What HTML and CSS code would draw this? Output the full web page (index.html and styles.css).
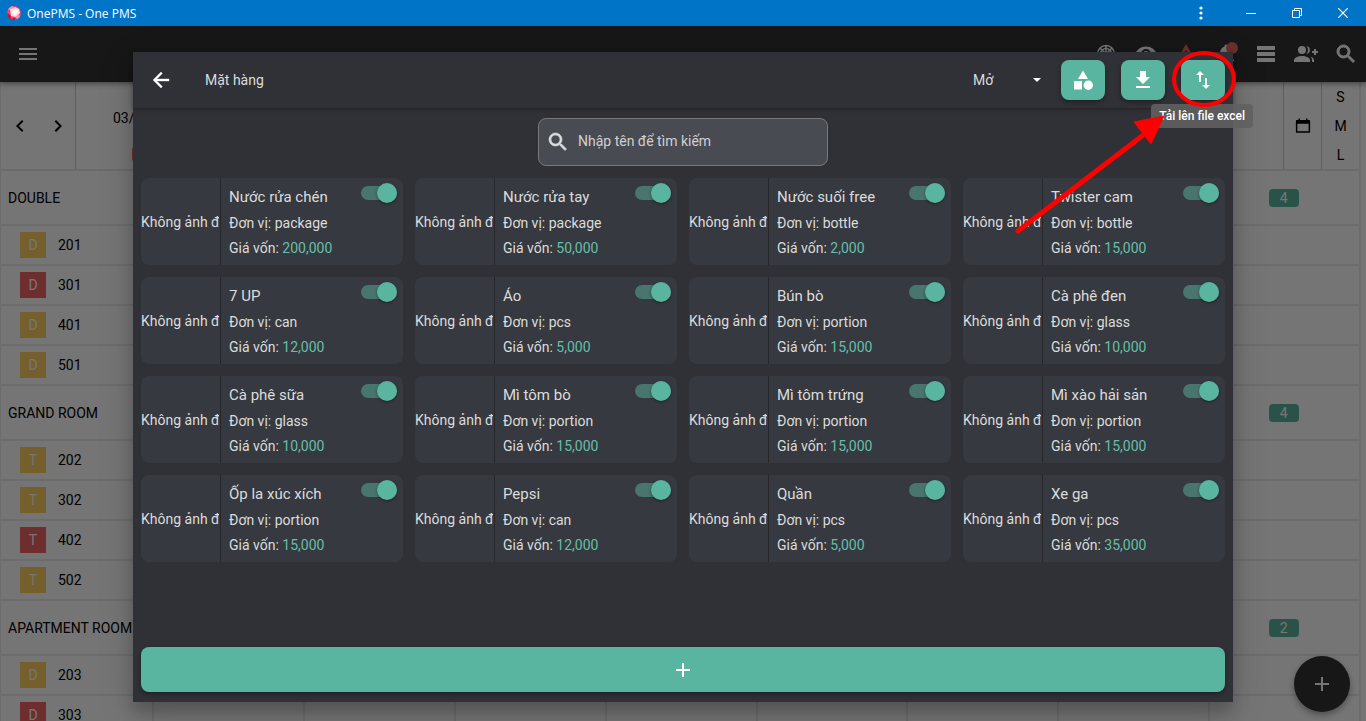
FILE: index.html
```html
<!DOCTYPE html>
<html lang="vi">
<head>
<meta charset="utf-8">
<meta name="viewport" content="width=device-width, initial-scale=1">
<title>OnePMS - One PMS</title>
<link rel="stylesheet" href="styles.css">
</head>
<body>
<div class="window">
  <header class="titlebar">
    <svg class="app-logo" viewBox="0 0 14 14" aria-hidden="true"><path fill="#f0456a" d="M5 0h4l4 3 1 4-1 4-4 3H5l-4-3-1-4 1-4z"/><path fill="#ffdbe6" d="M3 3l5-2 4 2 1 4-4 4-5-1z"/><path fill="#c5102f" d="M0 7l3 2 2 5-4-3zM6 12l3 0-1 2H5z"/><path fill="#ff8fa8" d="M5 0l3 2-4 1-3 1 1-2zM12 8l1 3-3 2-2-2z"/><path fill="#fff" d="M6 4l3-1 2 3-3 3-3-2z"/></svg>
    <span class="titlebar-text">OnePMS - One PMS</span>
    <button class="win-btn win-menu" aria-label="Menu"><svg width="4" height="14" viewBox="0 0 4 14"><g fill="#fff"><circle cx="2" cy="2" r="1.600"/><circle cx="2" cy="7" r="1.600"/><circle cx="2" cy="12" r="1.600"/></g></svg></button>
    <button class="win-btn" aria-label="Minimize"><svg width="10" height="10" viewBox="0 0 10 10"><path d="M0 5.500h10" stroke="#fff"/></svg></button>
    <button class="win-btn" aria-label="Restore"><svg width="10" height="10" viewBox="0 0 10 10"><path d="M.5 2.500h7v7h-7zM2.500 2.500v-2h7v7h-2" fill="none" stroke="#fff"/></svg></button>
    <button class="win-btn" aria-label="Close"><svg width="10" height="10" viewBox="0 0 10 10"><path d="M0 0l10 10M10 0L0 10" stroke="#fff" stroke-width="1.200"/></svg></button>
  </header>

  <div class="app">
    <nav class="appbar">
      <button class="icon-btn" aria-label="Menu chính"><svg class="icon" viewBox="0 0 24 24"><path d="M3 18h18v-2H3v2zm0-5h18v-2H3v2zm0-7v2h18V6H3z"/></svg></button>
      <div class="appbar-actions">
        <button class="icon-btn" aria-label="Kênh"><svg class="icon" viewBox="0 0 24 24"><g fill="none" stroke="#fff" stroke-width="1.500"><circle cx="12" cy="12" r="8.500"/><circle cx="12" cy="12" r="5.500"/><circle cx="12" cy="12" r="2"/><path d="M12 3v18M6 6l12 12M18 6L6 18"/></g></svg></button>
        <button class="icon-btn" aria-label="Hiển thị"><svg class="icon" viewBox="0 0 24 24"><path d="M12 4.500C7 4.500 2.730 7.610 1 12c1.730 4.390 6 7.500 11 7.500s9.270-3.110 11-7.500c-1.730-4.390-6-7.500-11-7.500zM12 17a5 5 0 1 1 0-10 5 5 0 0 1 0 10zm0-8a3 3 0 1 0 0 6 3 3 0 0 0 0-6z"/></svg></button>
        <button class="icon-btn" aria-label="Cảnh báo"><svg class="icon icon-warn" viewBox="0 0 24 24"><path d="M1 21h22L12 2 1 21zm5-3l6-10 6 10z"/></svg></button>
        <button class="icon-btn bell" aria-label="Thông báo"><svg class="icon" viewBox="0 0 24 24"><path d="M12 22c1.100 0 2-.9 2-2h-4c0 1.100.9 2 2 2zm6-6v-5c0-3.070-1.640-5.640-4.500-6.320V4a1.500 1.500 0 0 0-3 0v.68C7.630 5.360 6 7.920 6 11v5l-2 2v1h16v-1l-2-2z"/></svg><span class="dot"></span></button>
        <button class="icon-btn" aria-label="Danh sách"><svg class="icon" viewBox="0 0 24 24"><path d="M3 4h18v4H3zM3 10h18v4H3zM3 16h18v4H3z"/></svg></button>
        <button class="icon-btn" aria-label="Thêm khách"><svg class="icon" viewBox="0 0 24 24"><path d="M22 9V7h-2v2h-2v2h2v2h2v-2h2V9z"/><circle cx="8" cy="8" r="4"/><path d="M8 14c-4 0-8 2-8 4v2h16v-2c0-2-4-4-8-4zM12.500 11.950a4 4 0 0 0 0-7.900c.9 1 1.500 2.500 1.500 3.950s-.6 2.950-1.500 3.950zM16.500 14.800c.9.850 1.500 1.900 1.500 3.200v2h2v-2c0-1.400-1.500-2.500-3.500-3.200z"/></svg></button>
        <button class="icon-btn" aria-label="Tìm"><svg class="icon" viewBox="0 0 24 24"><path d="M15.500 14h-.79l-.28-.27A6.500 6.500 0 1 0 13.730 14.430l.27.28v.79l5 5L20.500 19l-5-5zm-6 0a4.500 4.500 0 1 1 0-9 4.500 4.500 0 0 1 0 9z" stroke="#fff"/></svg></button>
      </div>
    </nav>

    <main class="board">
      <div class="board-head">
        <div class="pager">
          <button class="icon-btn" aria-label="Trước"><svg class="icon icon-dark" viewBox="0 0 24 24"><path d="M15.400 7.400L14 6l-6 6 6 6 1.400-1.400L10.800 12z"/></svg></button>
          <button class="icon-btn" aria-label="Sau"><svg class="icon icon-dark" viewBox="0 0 24 24"><path d="M8.600 16.600L10 18l6-6-6-6-1.400 1.400L13.200 12z"/></svg></button>
        </div>
        <div class="date-cell"><span>03/</span><span class="date-badge"></span></div>
        <div class="cal-cell"><svg class="icon icon-dark" viewBox="0 0 24 24"><path d="M20 4h-2V2h-2v2H8V2H6v2H4c-1 0-1.500.5-1.500 1.500v14c0 1 .5 1.500 1.500 1.500h16c1 0 1.500-.5 1.500-1.500v-14c0-1-.5-1.500-1.500-1.500zm-.5 15h-15V9h15z"/></svg></div>
        <div class="size-cell"><span>S</span><span>M</span><span>L</span></div>
      </div>
      <div class="rows" id="rows"></div>
    </main>

    <button class="fab" aria-label="Thêm"><svg class="icon" viewBox="0 0 24 24"><path d="M19 13h-6v6h-2v-6H5v-2h6V5h2v6h6z"/></svg></button>

    <div class="backdrop">
      <section class="dialog" role="dialog" aria-label="Mặt hàng">
        <header class="dialog-bar">
          <button class="icon-btn" aria-label="Quay lại"><svg class="icon" viewBox="0 0 24 24"><path d="M20 11H7.830l5.590-5.590L12 4l-8 8 8 8 1.410-1.410L7.830 13H20z" stroke="#fff" stroke-width=".4"/></svg></button>
          <h1 class="dialog-title">Mặt hàng</h1>
          <div class="status">
            <select class="status-select" aria-label="Trạng thái"><option>Mở</option></select>
            <svg class="icon caret" viewBox="0 0 24 24"><path d="M8 10l4 4 4-4z"/></svg>
          </div>
          <button class="tool-btn" aria-label="Danh mục"><svg class="icon" viewBox="0 0 24 24"><path d="M12 2.500l5 8.500H7z"/><circle cx="17.300" cy="17.300" r="4.700"/><path d="M3 13h8v8.500H3z"/></svg></button>
          <button class="tool-btn" aria-label="Tải xuống"><svg class="icon" viewBox="0 0 24 24"><path d="M19 9h-4V3H9v6H5l7 7 7-7zM5 18v2h14v-2z"/></svg></button>
          <button class="tool-btn" aria-label="Tải lên file excel" aria-describedby="tip"><svg class="icon" viewBox="0 0 24 24"><path d="M16 17V10h-2v7h-3l4 4 4-4zM9 3L5 7h3v7h2V7h3z"/></svg></button>
        </header>
        <div class="dialog-body">
          <label class="search">
            <svg class="icon" viewBox="0 0 24 24"><path d="M15.500 14h-.79l-.28-.27A6.500 6.500 0 1 0 13.730 14.430l.27.28v.79l5 5L20.500 19l-5-5zm-6 0a4.500 4.500 0 1 1 0-9 4.500 4.500 0 0 1 0 9z" stroke="#dcdcdc" stroke-width=".6"/></svg>
            <input class="search-input" type="text" placeholder="Nhập tên để tìm kiếm" aria-label="Nhập tên để tìm kiếm">
          </label>
          <div class="cards" id="cards"></div>
          <button class="add-btn" aria-label="Thêm mặt hàng"><svg class="icon" viewBox="0 0 24 24"><path d="M19 13h-6v6h-2v-6H5v-2h6V5h2v6h6z"/></svg></button>
        </div>
        <div class="tooltip" id="tip" role="tooltip">Tải lên file excel</div>
        <svg class="marker" viewBox="0 0 228 192" aria-hidden="true"><ellipse cx="192" cy="31" rx="30" ry="26" fill="none" stroke="#f00" stroke-width="4"/><path d="M6 183L130 88" stroke="#f00" stroke-width="5" stroke-linecap="round"/><path d="M122 74l30-6-13 28z" fill="#f00" stroke="#f00" stroke-linejoin="round"/></svg>
      </section>
    </div>
  </div>
</div>
<script src="app.js"></script>
</body>
</html>
```
FILE: styles.css
```css
* { box-sizing: border-box; }

body {
  margin: 0;
  font-family: Roboto, "Noto Sans", sans-serif;
  font-size: 14px;
  color: #000;
}

button {
  display: flex;
  align-items: center;
  justify-content: center;
  margin: 0;
  padding: 0;
  border: 0;
  background: none;
  cursor: pointer;
}

.window { display: flex; flex-direction: column; height: 100vh; overflow: hidden; }

.titlebar {
  display: flex;
  flex: none;
  align-items: center;
  height: 26px;
  padding-left: 7px;
  background: #0074c6;
  color: #fff;
  font: 12px "Open Sans", "Noto Sans", sans-serif;
}
.app-logo { width: 14px; height: 14px; margin-right: 6px; }
.titlebar-text { flex: 1; }
.win-btn { width: 46px; height: 26px; }
.win-menu { width: 54px; }

.app { position: relative; flex: 1; min-height: 0; overflow: hidden; background: #fff; }

.icon { display: block; width: 24px; height: 24px; fill: #fff; }
.icon-dark { fill: #000; }
.icon-warn { fill: #f06464; }
.icon-btn { flex: none; width: 24px; height: 24px; }

.appbar {
  position: relative;
  display: flex;
  align-items: center;
  justify-content: space-between;
  height: 56px;
  padding: 0 8px 0 16px;
  background: #323236;
  box-shadow: 0 2px 5px rgba(0, 0, 0, .4);
}
.appbar-actions { display: flex; gap: 16px; }
.bell { position: relative; }
.dot {
  position: absolute;
  top: 0;
  right: 0;
  width: 12px;
  height: 12px;
  border-radius: 50%;
  background: #f06464;
}

.board { margin-right: 5px; border-right: 2px solid #ebebeb; border-left: 1px solid #ebebeb; }
.board-head { display: flex; height: 89px; border-bottom: 2px solid #e6e6e6; }
.pager {
  display: flex;
  align-items: center;
  justify-content: space-between;
  width: 75px;
  padding: 0 5px 0 7px;
  border-right: 1px solid #ccc;
}
.date-cell {
  display: flex;
  flex: 1;
  flex-direction: column;
  align-items: flex-start;
  gap: 20px;
  padding: 28px 37px 0;
}
.date-badge { width: 24px; height: 16px; margin-left: 19px; border-radius: 4px; background: #f06464; }
.cal-cell, .size-cell {
  display: flex;
  align-items: center;
  width: 38px;
  border-left: 1px solid #ccc;
}
.cal-cell { justify-content: center; }
.cal-cell .icon { width: 18px; height: 18px; }
.size-cell { flex-direction: column; justify-content: space-around; }

.row { display: flex; height: 40px; border-bottom: 2px solid #ebebeb; }
.row-group { height: 55px; }
.row-name {
  display: flex;
  flex: none;
  align-items: center;
  gap: 12px;
  width: 151px;
  padding-left: 19px;
}
.row-group .row-name { padding-left: 7px; white-space: nowrap; }
.tag {
  width: 26px;
  height: 26px;
  color: #fff;
  line-height: 26px;
  text-align: center;
}
.tag-yellow { background: #ffd060; }
.tag-red { background: #f06464; }
.cells { display: grid; flex: 1; grid-template-columns: repeat(8, 1fr); }
.cell { display: flex; align-items: center; justify-content: center; }
.row-item .cell { border-left: 2px solid #ebebeb; }
.count {
  width: 30px;
  border-radius: 4px;
  background: #5ab5a0;
  color: #fff;
  line-height: 18px;
  text-align: center;
}

.fab {
  position: absolute;
  right: 16px;
  bottom: 9px;
  width: 56px;
  height: 56px;
  border-radius: 50%;
  background: #323236;
  box-shadow: 0 3px 6px rgba(0, 0, 0, .35);
}

.backdrop {
  position: absolute;
  inset: 0;
  display: flex;
  justify-content: center;
  padding: 26px 0 19px;
  background: rgba(0, 0, 0, .54);
}

.dialog {
  position: relative;
  display: flex;
  flex: 1;
  flex-direction: column;
  max-width: 1100px;
  background: #303136;
  box-shadow: 0 11px 15px rgba(0, 0, 0, .2), 0 8px 36px rgba(0, 0, 0, .14);
  color: #dcdcdc;
}
.dialog-bar {
  display: flex;
  flex: none;
  align-items: center;
  gap: 16px;
  height: 56px;
  padding: 0 8px 0 16px;
  box-shadow: 0 1px 4px rgba(0, 0, 0, .35);
}
.dialog-title { flex: 1; margin: 0; padding-left: 16px; font-size: 14px; font-weight: 400; }
.status { display: flex; align-items: center; width: 76px; margin-right: -4px; }
.status-select {
  flex: 1;
  min-width: 0;
  padding: 0;
  border: 0;
  appearance: none;
  background: none;
  color: inherit;
  font: inherit;
}
.caret { flex: none; }
.tool-btn {
  width: 44px;
  height: 40px;
  border-radius: 8px;
  background: #5ab5a0;
  box-shadow: 0 2px 4px rgba(0, 0, 0, .35);
}

.dialog-body { display: flex; flex: 1; flex-direction: column; min-height: 0; padding: 10px 8px; }
.search {
  display: flex;
  flex: none;
  align-items: center;
  align-self: center;
  gap: 8px;
  width: 290px;
  height: 48px;
  padding: 0 7px;
  border: 1px solid #77787a;
  border-radius: 8px;
  background: #494b52;
}
.search .icon { fill: #dcdcdc; }
.search-input {
  flex: 1;
  min-width: 0;
  padding: 0 0 2px;
  border: 0;
  outline: 0;
  background: none;
  color: inherit;
  font: inherit;
}
.search-input::placeholder { color: #d0d0d2; opacity: 1; }

.cards {
  display: grid;
  flex: 1;
  grid-template-columns: repeat(4, 1fr);
  align-content: start;
  gap: 12px;
  min-height: 0;
  margin-top: 12px;
}
.card { display: flex; overflow: hidden; border-radius: 8px; background: #36393f; }
.thumb {
  display: flex;
  flex: none;
  align-items: center;
  width: 80px;
  overflow: hidden;
  border-right: 1px solid #26272b;
  white-space: nowrap;
}
.thumb span { width: 78px; overflow: hidden; }
.info { flex: 1; padding: 5px 6px 4px 8px; }
.info p { margin: 0; line-height: 25px; }
.info-top { display: flex; align-items: flex-start; justify-content: space-between; }
.name { margin: 0; font-size: 15px; font-weight: 400; line-height: 28px; }
.price { color: #66bfa9; }

.switch {
  display: flex;
  align-items: center;
  justify-content: flex-end;
  width: 36px;
  height: 14px;
  margin: 3px 0 0;
  border-radius: 7px;
  appearance: none;
  background: #48756d;
}
.switch::before {
  content: "";
  width: 20px;
  height: 20px;
  flex: none;
  border-radius: 50%;
  background: #5ab5a0;
  box-shadow: 0 1px 3px rgba(0, 0, 0, .4);
}

.add-btn {
  flex: none;
  height: 45px;
  border-radius: 8px;
  background: #5ab5a0;
  box-shadow: 0 2px 4px rgba(0, 0, 0, .35);
}

.tooltip {
  position: absolute;
  top: 52px;
  right: -20px;
  padding: 0 8px;
  border-radius: 4px;
  background: rgba(97, 97, 97, .9);
  color: #fff;
  font-size: 12px;
  font-weight: 500;
  line-height: 24px;
}
.marker {
  position: absolute;
  top: -4px;
  right: -7px;
  width: 228px;
  height: 192px;
  pointer-events: none;
}
```
FILE: app.js
```js
const groups = [
  ["DOUBLE", 4, [["D", "yellow", 201], ["D", "red", 301], ["D", "yellow", 401], ["D", "yellow", 501]]],
  ["GRAND ROOM", 4, [["T", "yellow", 202], ["T", "yellow", 302], ["T", "red", 402], ["T", "yellow", 502]]],
  ["APARTMENT ROOM", 2, [["D", "yellow", 203], ["D", "red", 303]]]
];
const products = [
  ["Nước rửa chén", "package", "200,000"], ["Nước rửa tay", "package", "50,000"],
  ["Nước suối free", "bottle", "2,000"], ["Twister cam", "bottle", "15,000"],
  ["7 UP", "can", "12,000"], ["Áo", "pcs", "5,000"],
  ["Bún bò", "portion", "15,000"], ["Cà phê đen", "glass", "10,000"],
  ["Cà phê sữa", "glass", "10,000"], ["Mì tôm bò", "portion", "15,000"],
  ["Mì tôm trứng", "portion", "15,000"], ["Mì xào hải sản", "portion", "15,000"],
  ["Ốp la xúc xích", "portion", "15,000"], ["Pepsi", "can", "12,000"],
  ["Quần", "pcs", "5,000"], ["Xe ga", "pcs", "35,000"]
];
const cells = last => '<div class="cells">' + '<div class="cell"></div>'.repeat(7) + `<div class="cell">${last}</div></div>`;

document.getElementById("rows").innerHTML = groups.map(([name, count, rooms]) =>
  `<div class="row row-group"><div class="row-name">${name}</div>${cells(`<span class="count">${count}</span>`)}</div>` +
  rooms.map(([tag, color, no]) =>
    `<div class="row row-item"><div class="row-name"><span class="tag tag-${color}">${tag}</span>${no}</div>${cells("")}</div>`
  ).join("")
).join("");

document.getElementById("cards").innerHTML = products.map(([name, unit, price]) => `
  <article class="card">
    <div class="thumb"><span>Không ảnh đ</span></div>
    <div class="info">
      <div class="info-top"><h2 class="name">${name}</h2><input class="switch" type="checkbox" role="switch" checked aria-label="${name}"></div>
      <p>Đơn vị: ${unit}</p>
      <p>Giá vốn: <span class="price">${price}</span></p>
    </div>
  </article>`).join("");
```
